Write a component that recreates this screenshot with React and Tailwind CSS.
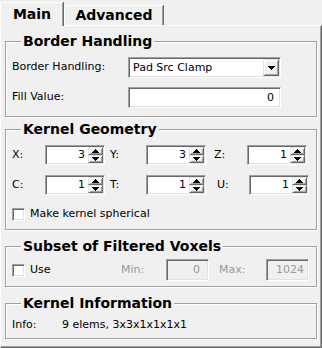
import React from 'react';

const sunken = 'border border-t-[#a0a0a0] border-l-[#a0a0a0] border-b-white border-r-white shadow-[inset_1px_1px_0_#696969,inset_-1px_-1px_0_#e3e3e3]';
const raised = 'border border-t-[#e3e3e3] border-l-[#e3e3e3] border-b-[#696969] border-r-[#696969] shadow-[inset_1px_1px_0_#ffffff,inset_-1px_-1px_0_#a0a0a0] bg-[#f0f0f0]';

const Arrow = ({ up }) => (
    <svg width="7" height="4" viewBox="0 0 7 4" shapeRendering="crispEdges">
        <polygon points={up ? '3.5,0 7,4 0,4' : '0,0 7,0 3.5,4'} fill="#000" />
    </svg>
);

const Group = ({ title, className = '', children }) => (
    <fieldset className={`border border-[#a0a0a0] shadow-[inset_1px_1px_0_#ffffff,1px_1px_0_#ffffff] px-[6px] ${className}`}>
        <legend className="ml-[9px] px-[2px] bg-[#f0f0f0] text-[14px] leading-[18px] font-bold text-black">
            {title}
        </legend>
        {children}
    </fieldset>
);

const SpinBox = ({ value, width = 'w-[60px]' }) => (
    <div className={`${sunken} ${width} h-[20px] bg-white flex items-stretch p-[1px]`}>
        <div className="flex-1 text-right pr-[3px] leading-[16px]">{value}</div>
        <div className="w-[15px] flex flex-col">
            <div className={`${raised} h-[8px] flex items-center justify-center`}>
                <Arrow up />
            </div>
            <div className={`${raised} h-[8px] flex items-center justify-center`}>
                <Arrow />
            </div>
        </div>
    </div>
);

const Checkbox = () => <div className={`${sunken} w-[13px] h-[13px] bg-white`} />;

const KernelRow = ({ items }) => (
    <div className="flex items-center h-[20px]">
        {items.map((item) => (
            <React.Fragment key={item.label}>
                <span className={`${item.lw} ${item.ml}`}>{item.label}</span>
                <SpinBox value={item.value} />
            </React.Fragment>
        ))}
    </div>
);

export default function App() {
    return (
        <div className="w-[322px] h-[348px] bg-[#f0f0f0] text-[11px] text-black font-['DejaVu_Sans',sans-serif] flex flex-col">
            {/* Tabs */}
            <div className="flex items-end h-[25px]">
                <div className="relative z-10 -mb-px w-[63px] h-[24px] bg-[#f0f0f0] border-l border-t border-white rounded-tl-[2px] shadow-[inset_-1px_0_0_#a0a0a0,1px_0_0_#696969] flex items-center justify-center text-[14px] font-bold pb-[1px]">
                    Main
                </div>
                <div className="ml-[1px] w-[99px] h-[20px] border-l border-t border-white rounded-tl-[2px] shadow-[inset_-1px_0_0_#a0a0a0,1px_0_0_#696969] flex items-center justify-center text-[14px] font-bold">
                    Advanced
                </div>
            </div>

            {/* Pane */}
            <div className="flex-1 border-l border-t border-white border-r border-b border-r-[#696969] border-b-[#696969] shadow-[inset_-1px_-1px_0_#a0a0a0] px-[4px] flex flex-col">
                <Group title="Border Handling" className="mt-[6px] pt-[7px] pb-[8px]">
                    <div className="flex flex-col gap-[9px]">
                        <div className="flex items-center h-[21px]">
                            <span className="w-[116px]">Border Handling:</span>
                            <div className={`${sunken} w-[153px] h-[21px] bg-white flex items-stretch p-[1px]`}>
                                <div className="flex-1 pl-[3px] leading-[17px]">Pad Src Clamp</div>
                                <div className={`${raised} w-[16px] flex items-center justify-center`}>
                                    <Arrow />
                                </div>
                            </div>
                        </div>
                        <div className="flex items-center h-[21px]">
                            <span className="w-[116px]">Fill Value:</span>
                            <div className={`${sunken} w-[153px] h-[21px] bg-white text-right pr-[6px] leading-[19px]`}>0</div>
                        </div>
                    </div>
                </Group>

                <Group title="Kernel Geometry" className="mt-[3px] pt-[7px] pb-[8px]">
                    <div className="flex flex-col gap-[10px]">
                        <KernelRow
                            items={[
                                { label: 'X:', value: 3, lw: 'w-[33px]', ml: '' },
                                { label: 'Y:', value: 3, lw: 'w-[36px]', ml: 'ml-[5px]' },
                                { label: 'Z:', value: 1, lw: 'w-[33px]', ml: 'ml-[8px]' },
                            ]}
                        />
                        <KernelRow
                            items={[
                                { label: 'C:', value: 1, lw: 'w-[33px]', ml: '' },
                                { label: 'T:', value: 1, lw: 'w-[36px]', ml: 'ml-[5px]' },
                                { label: 'U:', value: 1, lw: 'w-[32px]', ml: 'ml-[11px]' },
                            ]}
                        />
                    </div>
                    <div className="flex items-center gap-[5px] h-[13px] mt-[13px]">
                        <Checkbox />
                        <span>Make kernel spherical</span>
                    </div>
                </Group>

                <Group title="Subset of Filtered Voxels" className="mt-[7px] pt-[4px] pb-[5px]">
                    <div className="flex items-center h-[22px]">
                        <div className="w-[109px] flex items-center gap-[5px]">
                            <Checkbox />
                            <span>Use</span>
                        </div>
                        <span className="w-[45px] text-[#9a9a9a]">Min:</span>
                        <div className={`${sunken} w-[43px] h-[22px] bg-[#f0f0f0] text-right pr-[8px] leading-[20px] text-[#9a9a9a]`}>0</div>
                        <span className="ml-[10px] w-[47px] text-[#9a9a9a]">Max:</span>
                        <div className={`${sunken} w-[43px] h-[22px] bg-[#f0f0f0] text-right pr-[4px] leading-[20px] text-[#9a9a9a]`}>1024</div>
                    </div>
                </Group>

                <Group title="Kernel Information" className="mt-[7px] pt-[5px] pb-[5px]">
                    <div className="flex items-center h-[16px]">
                        <span className="w-[50px]">Info:</span>
                        <span>9 elems, 3x3x1x1x1x1</span>
                    </div>
                </Group>
            </div>
        </div>
    );
}
